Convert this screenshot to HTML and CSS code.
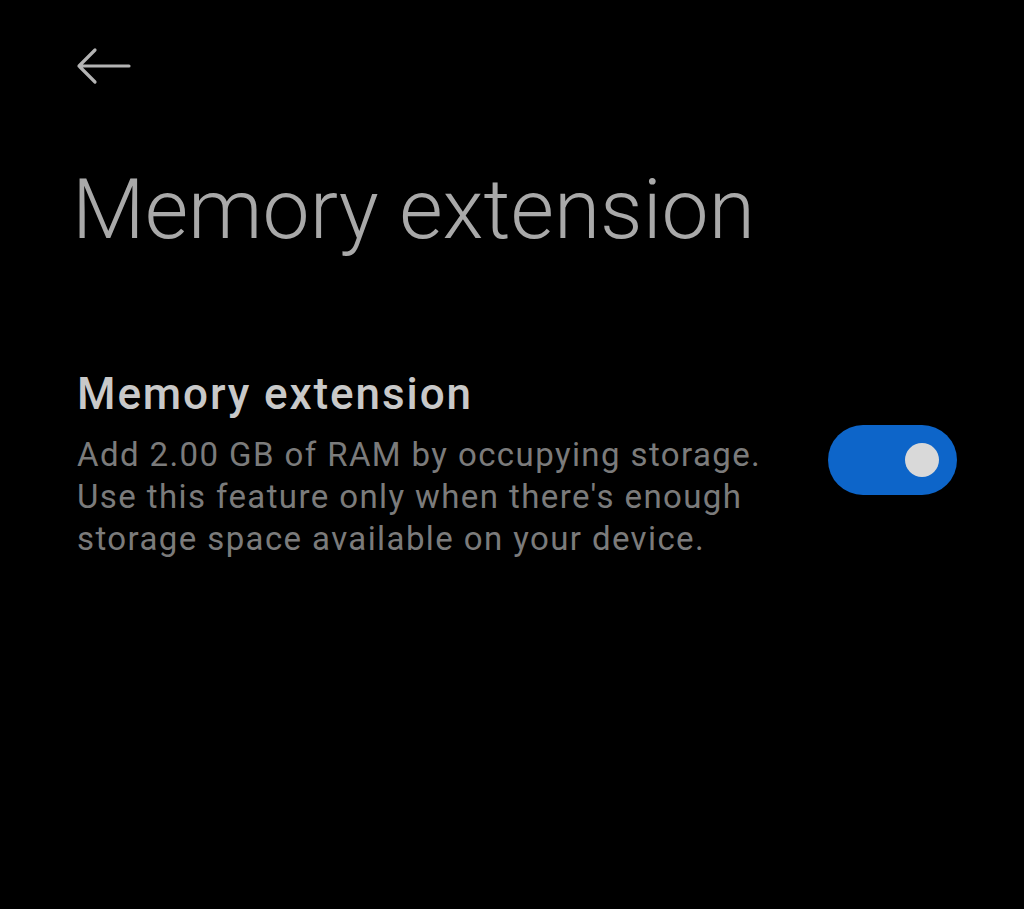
FILE: index.html
```html
<!DOCTYPE html>
<html>
<head>
<meta charset="utf-8">
<link rel="stylesheet" href="styles.css">
</head>
<body>
<div class="page">
  <div class="topbar">
    <svg class="back" width="56" height="40" viewBox="0 0 56 40">
      <path d="M54 20 H4 M20 4 L4 20 L20 36" fill="none" stroke="#b4b4b4" stroke-width="3.2" stroke-linecap="round" stroke-linejoin="round"/>
    </svg>
  </div>
  <h1 class="title">Memory extension</h1>
  <div class="row">
    <div class="text">
      <div class="label">Memory extension</div>
      <div class="desc">Add 2.00 GB of RAM by occupying storage.<br>Use this feature only when there's enough<br>storage space available on your device.</div>
    </div>
    <div class="toggle"><div class="knob"></div></div>
  </div>
</div>
</body>
</html>
```
FILE: styles.css
```css
html, body {
  margin: 0;
  padding: 0;
  background: #000;
}
.page {
  width: 1024px;
  height: 909px;
  background: #000;
  font-family: Roboto, "Noto Sans", sans-serif;
  overflow: hidden;
}
.topbar {
  padding: 46px 0 0 75px;
  height: 40px;
}
.back {
  display: block;
}
.title {
  margin: 74px 0 0 72px;
  font-size: 84px;
  font-weight: 300;
  line-height: 100px;
  color: #a9a9a9;
  letter-spacing: 0;
}
.row {
  display: flex;
  align-items: center;
  justify-content: space-between;
  margin: 108px 67px 0 77px;
}
.label {
  font-size: 44px;
  font-weight: 500;
  line-height: 52px;
  color: #c9c9c9;
  letter-spacing: 1.9px;
}
.desc {
  margin-top: 14px;
  font-size: 33px;
  line-height: 42px;
  color: #7b7b7b;
  letter-spacing: 1.4px;
}
.toggle {
  width: 129px;
  height: 70px;
  border-radius: 35px;
  background: #0d65c9;
  display: flex;
  align-items: center;
  justify-content: flex-end;
  padding-right: 18px;
  box-sizing: border-box;
  margin-bottom: 8px;
}
.knob {
  width: 34px;
  height: 34px;
  border-radius: 50%;
  background: #d9d9d9;
}
```
